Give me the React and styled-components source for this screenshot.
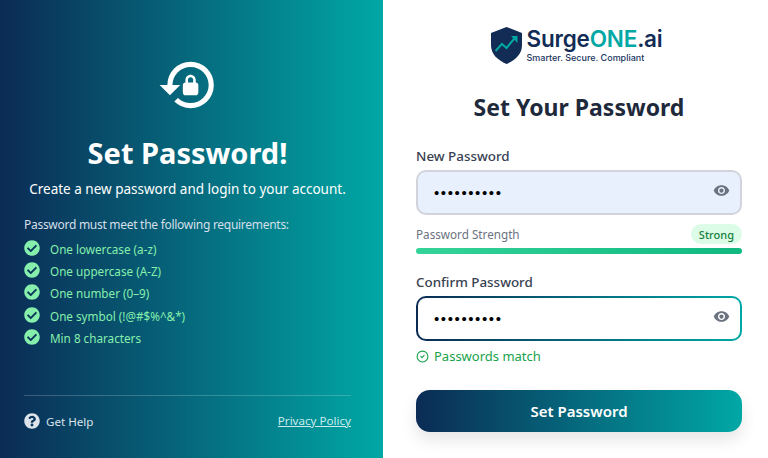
import React from "react";
import styled, { createGlobalStyle } from "styled-components";
import { MdLockReset, MdVisibility } from "react-icons/md";
import { FaCheckCircle, FaQuestionCircle } from "react-icons/fa";
import { LuCircleCheck } from "react-icons/lu";

const requirements = [
  "One lowercase (a-z)",
  "One uppercase (A-Z)",
  "One number (0–9)",
  "One symbol (!@#$%^&*)",
  "Min 8 characters",
];

const GlobalStyle = createGlobalStyle`
  html, body {
    margin: 0;
    padding: 0;
    background: #fff;
    overflow: hidden;
  }
  * {
    box-sizing: border-box;
  }
  body {
    font-family: "Noto Sans", "Open Sans", sans-serif;
  }
`;

const Page = styled.div`
  display: flex;
  width: 768px;
  height: 458px;
`;

const Side = styled.aside`
  width: 383px;
  height: 458px;
  padding: 54px 32px 0 24px;
  display: flex;
  flex-direction: column;
  color: #fff;
  background: linear-gradient(90deg, #0b2b55 0%, #00a8a5 100%);
`;

const HeroIcon = styled.div`
  display: flex;
  justify-content: center;
  height: 62px;
  font-size: 62px;
  line-height: 0;
`;

const SideTitle = styled.h1`
  margin: 16px 0 0;
  font-size: 29px;
  line-height: 42px;
  font-weight: 700;
  text-align: center;
`;

const SideText = styled.p`
  margin: 5px 0 0;
  font-size: 13.5px;
  line-height: 20px;
  text-align: center;
`;

const ReqTitle = styled.p`
  margin: 16px 0 0;
  font-size: 12px;
  letter-spacing: -0.28px;
  line-height: 20px;
  color: #d5dfe8;
`;

const ReqList = styled.ul`
  list-style: none;
  margin: 3px 0 0;
  padding: 0;
  display: flex;
  flex-direction: column;
`;

const ReqItem = styled.li`
  display: flex;
  align-items: center;
  gap: 10px;
  height: 22.2px;
  font-size: 11.7px;
  color: #86efac;
  svg {
    width: 16px;
    height: 16px;
    flex: none;
    margin-top: -2px;
  }
`;

const SideFooter = styled.footer`
  margin-top: auto;
  height: 63px;
  border-top: 1px solid rgba(255, 255, 255, 0.2);
  display: flex;
  align-items: flex-start;
  justify-content: space-between;
  padding-top: 17px;
  font-size: 11.6px;
`;

const Help = styled.span`
  display: flex;
  align-items: center;
  gap: 6px;
  color: #d9e4ec;
  svg {
    width: 16px;
    height: 16px;
    color: #dde3ea;
  }
`;

const Privacy = styled.a`
  color: #c9ecec;
  text-decoration: underline;
`;

const Main = styled.main`
  flex: 1;
  padding: 25px 26px 0 33px;
  display: flex;
  flex-direction: column;
  background: #fff;
`;

const Logo = styled.div`
  display: flex;
  align-items: flex-start;
  justify-content: center;
  gap: 4px;
  height: 40px;
  padding-right: 4px;
`;

const LogoWords = styled.div`
  display: flex;
  flex-direction: column;
`;

const LogoName = styled.div`
  font-family: "Inter", sans-serif;
  font-size: 22.5px;
  line-height: 27px;
  font-weight: 600;
  letter-spacing: -0.2px;
  color: #122c55;
  span {
    color: #00a8a5;
  }
`;

const LogoTag = styled.div`
  font-family: "Inter", sans-serif;
  font-size: 9px;
  line-height: 11px;
  font-weight: 500;
  color: #1b3560;
`;

const ShieldMark = styled.svg`
  margin-top: 2px;
  flex: none;
`;

const Title = styled.h2`
  margin: 26px 0 0;
  font-size: 23px;
  line-height: 32px;
  font-weight: 700;
  text-align: center;
  color: #1e293b;
`;

const Label = styled.label`
  display: block;
  font-size: 13.4px;
  line-height: 20px;
  font-weight: 500;
  color: #374151;
  margin-top: ${(p) => p.$top}px;
`;

const Field = styled.div`
  margin-top: 4px;
  height: 45px;
  display: flex;
  align-items: center;
  padding: 0 10px 0 16px;
  border-radius: 10px;
  border: 2px solid ${(p) => (p.$focused ? "transparent" : "#d1d5db")};
  background: ${(p) =>
    p.$focused
      ? "linear-gradient(#fff, #fff) padding-box, linear-gradient(90deg, #0b2b55, #00a8a5) border-box"
      : "#e8f0fe"};
`;

const Input = styled.input`
  flex: 1;
  min-width: 0;
  border: 0;
  outline: 0;
  padding: 0;
  background: transparent;
  font-family: "Liberation Sans", sans-serif;
  font-size: 15px;
  letter-spacing: 1.6px;
  color: #000;
`;

const EyeIcon = styled(MdVisibility)`
  width: 17px;
  height: 17px;
  margin-bottom: 4px;
  color: #6b7280;
  flex: none;
`;

const StrengthRow = styled.div`
  margin-top: 9px;
  height: 20px;
  display: flex;
  align-items: center;
  justify-content: space-between;
  font-size: 11.7px;
  color: #6b7280;
`;

const Badge = styled.span`
  height: 20px;
  padding: 0 8px;
  display: flex;
  align-items: center;
  border-radius: 10px;
  font-size: 11px;
  font-weight: 500;
  color: #15803d;
  background: #dcfce7;
`;

const Bar = styled.div`
  margin-top: 4px;
  height: 6px;
  border-radius: 3px;
  background: linear-gradient(90deg, #34d399, #10b981);
`;

const Match = styled.div`
  margin-top: 5px;
  height: 20px;
  display: flex;
  align-items: center;
  gap: 5px;
  font-size: 13px;
  color: #16a34a;
  svg {
    width: 13px;
    height: 13px;
  }
`;

const Submit = styled.button`
  margin-top: 24px;
  height: 42px;
  border: 0;
  border-radius: 14px;
  font-family: inherit;
  font-size: 15px;
  font-weight: 600;
  color: #fff;
  background: linear-gradient(90deg, #0b2b55 0%, #00a8a5 100%);
  box-shadow: 0 8px 16px rgba(0, 0, 0, 0.1);
`;

const Shield = () => (
  <ShieldMark width="31" height="37" viewBox="0 0 34 37" preserveAspectRatio="none">
    <path d="M17 0 L34 6 V18 C34 27 27 33 17 37 C7 33 0 27 0 18 V6 Z" fill="#122c55" />
    <path d="M5 24 L12 17 L17 21 L27 10" fill="none" stroke="#00a8a5" strokeWidth="2.2" />
    <path d="M22 9 H29 V16 Z" fill="#00a8a5" />
  </ShieldMark>
);

const App = () => {
  return (
    <Page>
      <GlobalStyle />
      <Side>
        <HeroIcon>
          <MdLockReset />
        </HeroIcon>
        <SideTitle>Set Password!</SideTitle>
        <SideText>Create a new password and login to your account.</SideText>
        <ReqTitle>Password must meet the following requirements:</ReqTitle>
        <ReqList>
          {requirements.map((item) => (
            <ReqItem key={item}>
              <FaCheckCircle />
              {item}
            </ReqItem>
          ))}
        </ReqList>
        <SideFooter>
          <Help>
            <FaQuestionCircle />
            Get Help
          </Help>
          <Privacy href="#">Privacy Policy</Privacy>
        </SideFooter>
      </Side>
      <Main>
        <Logo>
          <Shield />
          <LogoWords>
            <LogoName>
              Surge<span>ONE</span>.ai
            </LogoName>
            <LogoTag>Smarter. Secure. Compliant</LogoTag>
          </LogoWords>
        </Logo>
        <Title>Set Your Password</Title>
        <Label $top={23}>New Password</Label>
        <Field>
          <Input type="password" defaultValue="Surge1234!" readOnly />
          <EyeIcon />
        </Field>
        <StrengthRow>
          Password Strength
          <Badge>Strong</Badge>
        </StrengthRow>
        <Bar />
        <Label $top={18}>Confirm Password</Label>
        <Field $focused>
          <Input type="password" defaultValue="Surge1234!" readOnly />
          <EyeIcon />
        </Field>
        <Match>
          <LuCircleCheck />
          Passwords match
        </Match>
        <Submit>Set Password</Submit>
      </Main>
    </Page>
  );
};

export default App;
